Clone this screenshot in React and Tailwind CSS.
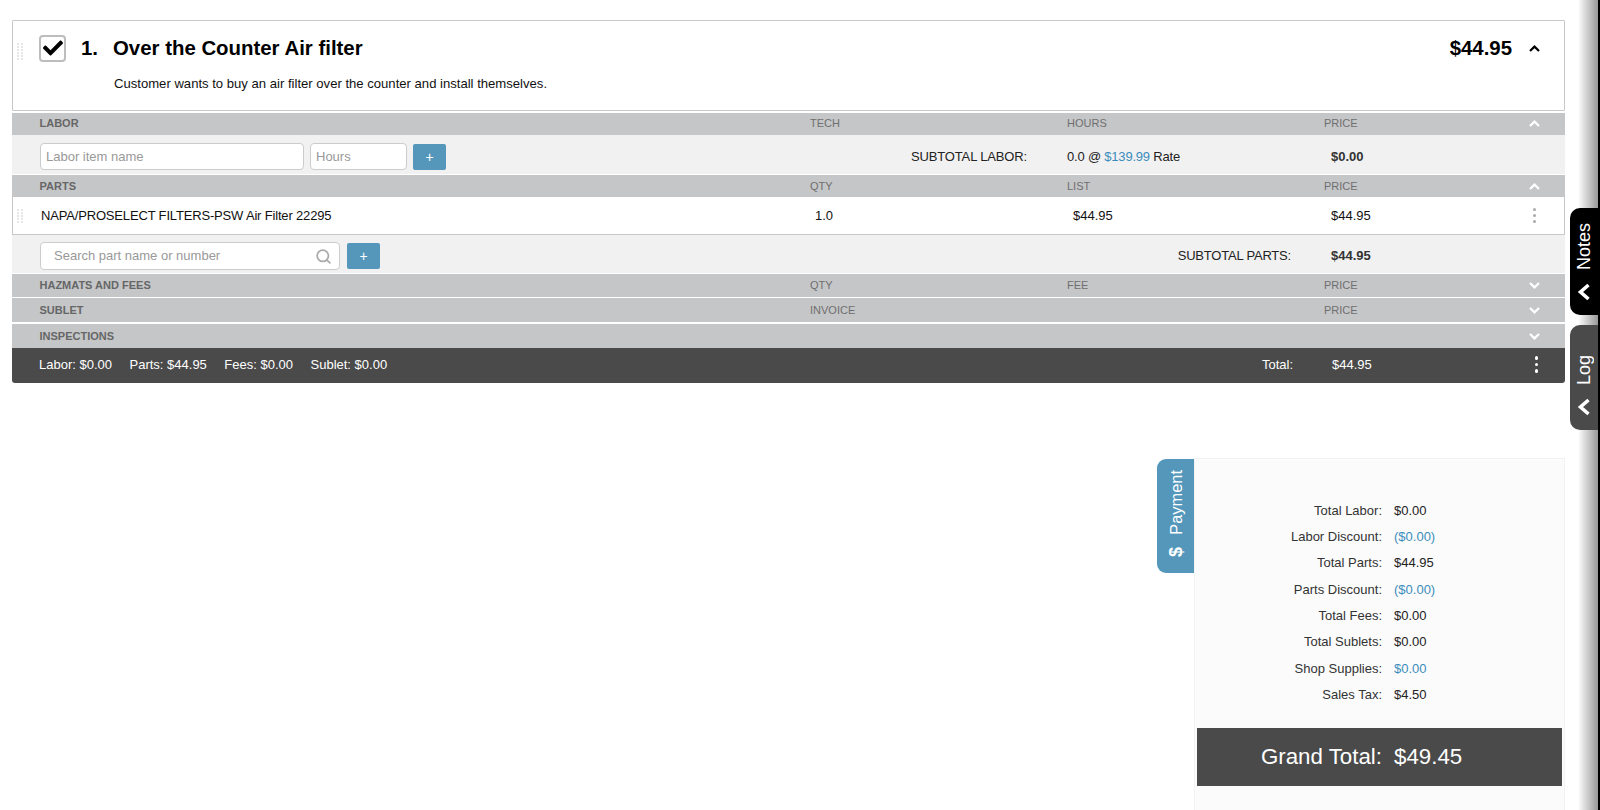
import React from "react";
import { FaCheck } from "react-icons/fa";
import { Search } from "lucide-react";

const Chevron = ({ up, className }) => (
  <svg width="11" height="7" viewBox="0 0 11 7" className={className} fill="none" stroke="currentColor" strokeWidth="2.2">
    <polyline points={up ? "1,6 5.5,1.6 10,6" : "1,1 5.5,5.4 10,1"} />
  </svg>
);

const Grip = ({ rows = 6 }) => (
  <div className="grid grid-cols-2 gap-x-[2px] gap-y-[1px] w-[6px]">
    {Array.from({ length: rows * 2 }).map((_, i) => (
      <span key={i} className="w-[2px] h-[2px] bg-[#e6e6e6]" />
    ))}
  </div>
);

const Dots = ({ className, size }) => (
  <div className={`flex flex-col gap-[3px] items-center ${className}`}>
    <span className={`rounded-full bg-current ${size}`} />
    <span className={`rounded-full bg-current ${size}`} />
    <span className={`rounded-full bg-current ${size}`} />
  </div>
);

const Header = ({ h, label, b, c, d, up, mt, extra = "" }) => (
  <div className={`grid grid-cols-[771px_257px_257px_1fr] items-center pl-[27px] bg-[#c5c6c8] text-[11px] text-[#6f6f6f] ${h} ${mt} ${extra}`}>
    <span className="font-bold text-[#666] pl-[0.5px]">{label}</span>
    <span>{b}</span>
    <span>{c}</span>
    <div className="flex items-center justify-between pr-[25px]">
      <span>{d}</span>
      <Chevron up={up} className="text-white" />
    </div>
  </div>
);

const Summary = ({ label, value, blue }) => (
  <div className="flex items-center h-[26.3px] text-[13px]">
    <span className="w-[187px] text-right text-[#333]">{label}</span>
    <span className={`ml-[12px] ${blue ? "text-[#3b8dbd]" : "text-[#222]"}`}>{value}</span>
  </div>
);

const SideTab = ({ label, className }) => (
  <div className={`flex flex-col items-center justify-end w-[28px] rounded-l-[10px] text-white pb-[14px] ${className}`}>
    <span className="[writing-mode:vertical-rl] rotate-180 text-[18px] leading-none">{label}</span>
    <svg width="14" height="18" viewBox="0 0 14 18" className="mt-[13px]" fill="none" stroke="currentColor" strokeWidth="3.6">
      <polyline points="11.5,2 3.5,9 11.5,16" />
    </svg>
  </div>
);

const inputBox = "h-[27px] border border-[#ccc] rounded-[4px] bg-white flex items-center text-[#999]";
const plus = "w-[33px] h-[26px] rounded-[2px] bg-[#5497bb] text-white text-[14px] leading-none";

export default function App() {
  return (
    <div className="relative h-[810px] overflow-hidden bg-white text-black font-['Liberation_Sans',Arial,sans-serif]">
      <div className="pt-5 pl-3 pr-[35px]">
        <div className="relative h-[91px] border border-[#c8c8c8] rounded-[1px] bg-white">
          <div className="absolute left-[4px] top-[22px]"><Grip /></div>
          <div className="flex items-center pt-[12px] pl-[26px] pr-[24px]">
            <div className="w-[27px] h-[27px] border-2 border-[#bdbdbd] rounded-[4px] flex items-center justify-center">
              <FaCheck className="w-[20px] h-[20px] text-black" />
            </div>
            <span className="ml-[15px] w-[32px] text-[20.4px] font-bold">1.</span>
            <span className="text-[20.4px] font-bold">Over the Counter Air filter</span>
            <span className="ml-auto text-[20.4px] font-bold">$44.95</span>
            <Chevron up className="ml-[17px] text-black" />
          </div>
          <p className="mt-[10px] ml-[101px] text-[13.1px] text-[#111]">Customer wants to buy an air filter over the counter and install themselves.</p>
        </div>

        <Header h="h-[22px]" mt="mt-[2px]" extra="pb-[1px]" label="LABOR" b="TECH" c="HOURS" d="PRICE" up />
        <div className="grid grid-cols-[771px_257px_257px_1fr] items-center h-[39px] pt-[4px] pl-[27px] bg-[#f1f1f1] text-[13px] text-[#222]">
          <div className="flex items-center pl-[1px]">
            <div className={`w-[264px] pl-[5px] ${inputBox}`}>Labor item name</div>
            <div className={`ml-[6px] w-[97px] pl-[5px] ${inputBox}`}>Hours</div>
            <button className={`ml-[6px] ${plus}`}>+</button>
          </div>
          <span className="text-right pr-[40px] tracking-[-0.15px]">SUBTOTAL LABOR:</span>
          <span className="tracking-[-0.2px]">0.0 @ <span className="text-[#3b8dbd]">$139.99</span> Rate</span>
          <span className="pl-[7px] font-bold text-[#333]">$0.00</span>
        </div>

        <Header h="h-[22px]" mt="mt-[1px]" label="PARTS" b="QTY" c="LIST" d="PRICE" up />
        <div className="relative grid grid-cols-[771px_257px_257px_1fr] items-center h-[38px] pl-[27px] bg-white border-x border-b border-[#c8c8c8] text-[13px] text-[#111]">
          <div className="absolute left-[4px] top-[12px]"><Grip rows={5} /></div>
          <span className="pl-[1px] tracking-[-0.17px]">NAPA/PROSELECT FILTERS-PSW Air Filter 22295</span>
          <span className="pl-[4px]">1.0</span>
          <span className="pl-[5px]">$44.95</span>
          <div className="flex items-center justify-between pl-[6px] pr-[28px]">
            <span>$44.95</span>
            <Dots className="text-[#aaa]" size="w-[3px] h-[3px]" />
          </div>
        </div>
        <div className="grid grid-cols-[771px_257px_257px_1fr] items-center h-[38px] pt-[4px] pl-[27px] bg-[#f1f1f1] text-[13px] text-[#222]">
          <div className="flex items-center pl-[1px]">
            <div className={`w-[300px] pl-[13px] pr-[7px] justify-between h-[28px] ${inputBox}`}>
              <span>Search part name or number</span>
              <Search className="w-[17px] h-[17px] text-[#aaa]" strokeWidth={2.5} />
            </div>
            <button className={`ml-[7px] ${plus}`}>+</button>
          </div>
          <span></span>
          <span className="text-right pr-[33px] tracking-[-0.2px]">SUBTOTAL PARTS:</span>
          <span className="pl-[7px] font-bold text-[#333]">$44.95</span>
        </div>

        <Header h="h-[23px]" mt="mt-[1px]" label="HAZMATS AND FEES" b="QTY" c="FEE" d="PRICE" />
        <Header h="h-[24px]" mt="mt-[1px]" label="SUBLET" b="INVOICE" d="PRICE" />
        <Header h="h-[24px]" mt="mt-[2px]" label="INSPECTIONS" />

        <div className="grid grid-cols-[771px_257px_257px_1fr] items-center h-[35px] pb-[2px] pl-[27px] bg-[#4a4a4a] rounded-b-[3px] text-[13px] text-white">
          <div className="flex items-center gap-[17.5px]">
            <span>Labor: $0.00</span>
            <span>Parts: $44.95</span>
            <span>Fees: $0.00</span>
            <span>Sublet: $0.00</span>
          </div>
          <span></span>
          <span className="text-right pr-[31px]">Total:</span>
          <div className="flex items-center justify-between pl-[8px] pr-[27px]">
            <span>$44.95</span>
            <Dots className="text-white" size="w-[3.5px] h-[3.5px]" />
          </div>
        </div>

        <div className="flex justify-end items-start mt-[75px]">
          <div className="mt-[1px] w-[37px] h-[114px] bg-[#5497bb] rounded-l-[9px] text-white flex flex-col items-center justify-end pb-[16px]">
            <span className="ml-[1px] [writing-mode:vertical-rl] rotate-180 text-[16.4px] leading-none">Payment</span>
            <span className="mt-[12px] [writing-mode:vertical-rl] rotate-180 text-[18px] leading-none font-bold">$</span>
          </div>
          <div className="w-[371px] h-[360px] bg-[#fbfbfb] border border-[#f2f2f2] pt-[38.5px]">
            <Summary label="Total Labor:" value="$0.00" />
            <Summary label="Labor Discount:" value="($0.00)" blue />
            <Summary label="Total Parts:" value="$44.95" />
            <Summary label="Parts Discount:" value="($0.00)" blue />
            <Summary label="Total Fees:" value="$0.00" />
            <Summary label="Total Sublets:" value="$0.00" />
            <Summary label="Shop Supplies:" value="$0.00" blue />
            <Summary label="Sales Tax:" value="$4.50" />
            <div className="mt-[20px] mx-[2px] h-[58.5px] pb-[1px] bg-[#4a4a4a] flex items-center text-white text-[22.3px]">
              <span className="w-[185px] text-right">Grand Total:</span>
              <span className="ml-[12px]">$49.45</span>
            </div>
          </div>
        </div>
      </div>

      <div className="absolute top-0 right-0 bottom-0 w-[22px] bg-linear-to-r from-white to-[#999] border-r-2 border-black" />
      <div className="absolute top-[208px] right-[2px] flex flex-col gap-[10px]">
        <SideTab label="Notes" className="h-[107px] bg-black" />
        <SideTab label="Log" className="h-[105px] bg-[#4a4a4a]" />
      </div>
    </div>
  );
}
